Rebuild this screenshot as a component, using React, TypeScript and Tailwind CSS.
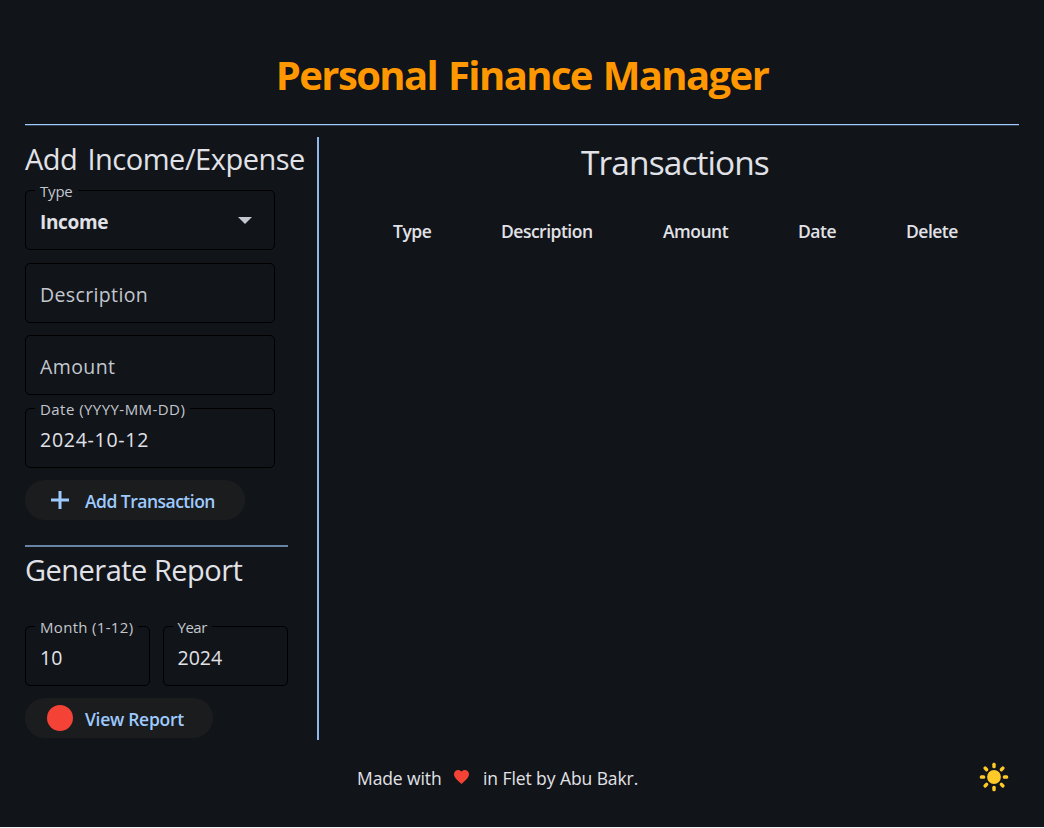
import type { ReactNode } from 'react';

function Field({
  label,
  value,
  placeholder,
  className = '',
  valueClass = '',
  labelClass = '',
  children,
}: {
  label?: string;
  value?: string;
  placeholder?: string;
  className?: string;
  valueClass?: string;
  labelClass?: string;
  children?: ReactNode;
}) {
  return (
    <div className={`relative flex h-[60px] items-center justify-between rounded-[5px] border-[1.25px] border-black pl-[14px] text-[19.5px] leading-[24px] ${className}`}>
      {label && (
        <span className={`absolute -top-[10px] left-[9px] bg-[#111418] px-[5px] text-[15px] leading-[20px] text-[#c3c7cf] ${labelClass}`}>
          {label}
        </span>
      )}
      <span className={`pt-[4px] ${placeholder ? 'text-[#c3c7cf]' : 'text-[#e1e2e8]'} ${valueClass}`}>{value ?? placeholder}</span>
      {children}
    </div>
  );
}

function PillButton({ icon, children, className = '' }: { icon: ReactNode; children: ReactNode; className?: string }) {
  return (
    <button className={`flex h-[40px] items-center rounded-full bg-[#1b1c1d] pl-[20px] text-[17.5px] leading-[24px] font-semibold text-[#9ecaff] ${className}`}>
      <span className="flex w-[30px] justify-center">{icon}</span>
      <span className="pt-[1px] pl-[10px] whitespace-nowrap">{children}</span>
    </button>
  );
}

function Sun() {
  return (
    <svg className="h-[30px] w-[30px]" viewBox="-15 -15 30 30" fill="#ffca28">
      <circle r="6.9" />
      {[0, 45, 90, 135, 180, 225, 270, 315].map((angle) => (
        <rect key={angle} x="-1.7" y="-14.2" width="3.4" height="5.4" rx="1.5" transform={`rotate(${angle})`} />
      ))}
    </svg>
  );
}

export default function App() {
  return (
    <div className="flex h-[828px] w-[1044px] flex-col border-b border-[#f0f0f0] bg-[#111418] px-[25px] pt-[45px] font-['Open_Sans','Noto_Sans',sans-serif] text-[#e1e2e8]">
      <h1 className="h-[60px] text-center text-[40px] leading-[60px] font-bold tracking-[-1.6px] text-[#ff9800] [word-spacing:2px]">
        Personal Finance Manager
      </h1>
      <div className="mt-[19px] h-[2px] w-[994px] border-b border-[#324051] bg-[#9ecaff]" />

      <main className="mt-[11px] flex h-[603px]">
        <section className="flex w-[292px] flex-col items-start">
          <h2 className="h-[44px] text-[29px] leading-[44px] tracking-[-0.48px] whitespace-nowrap [word-spacing:3px]">Add Income/Expense</h2>
          <Field label="Type" value="Income" className="mt-[9px] w-[250px]" valueClass="text-[19px] font-bold tracking-[-0.35px]" labelClass="tracking-[-0.2px]">
            <svg className="mr-[22px] h-[7px] w-[14px]" viewBox="0 0 14 7">
              <path d="M0 0H14L7 7Z" fill="#c3c7cf" />
            </svg>
          </Field>
          <Field placeholder="Description" className="mt-[13px] w-[250px]" valueClass="tracking-[0.36px]" />
          <Field placeholder="Amount" className="mt-[12px] w-[250px]" valueClass="tracking-[0.4px]" />
          <Field label="Date (YYYY-MM-DD)" value="2024-10-12" className="mt-[13px] w-[250px]" valueClass="tracking-[0.74px]" labelClass="tracking-[0.45px]" />
          <PillButton
            className="mt-[12px] w-[220px] tracking-[-0.51px]"
            icon={
              <svg className="h-[18px] w-[18px]" viewBox="0 0 18 18">
                <path d="M9 0V18M0 9H18" stroke="#9ecaff" strokeWidth="3" />
              </svg>
            }
          >
            Add Transaction
          </PillButton>
          <div className="mt-[25px] h-[2px] w-[263px] bg-[#6883a6]" />
          <h2 className="mt-[1px] h-[44px] text-[29px] leading-[44px] tracking-[-0.52px]">Generate Report</h2>
          <div className="mt-[34px] flex gap-[12.5px]">
            <Field label="Month (1-12)" value="10" className="w-[125px]" labelClass="tracking-[0.32px]" />
            <Field label="Year" value="2024" className="w-[125px]" labelClass="tracking-[-0.5px]" />
          </div>
          <PillButton className="mt-[12px] w-[188px] tracking-[-0.29px]" icon={<span className="h-[26px] w-[26px] rounded-full bg-[#f44336]" />}>
            View Report
          </PillButton>
        </section>

        <div className="w-[2px] bg-[#8fb7ea]" />

        <section className="flex-1 pl-[12px]">
          <h2 className="h-[50px] text-center text-[33.5px] leading-[50px] tracking-[-0.93px]">Transactions</h2>
          <div className="mt-[32px] flex pl-[62px] text-[17.5px] leading-[24px] font-semibold tracking-[-0.5px]">
            <span className="w-[108px]">Type</span>
            <span className="w-[162px]">Description</span>
            <span className="w-[135px]">Amount</span>
            <span className="w-[108px]">Date</span>
            <span>Delete</span>
          </div>
        </section>
      </main>

      <footer className="mt-[21px] flex h-[32px] items-center text-[17.5px] leading-[24px]">
        <span className="w-[429px] pt-[2px] pl-[332px] tracking-[-0.1px] whitespace-nowrap">Made with</span>
        <svg className="h-[14px] w-[15px]" viewBox="2 3 20 18.35" preserveAspectRatio="none">
          <path
            fill="#f44336"
            d="M12 21.35l-1.45-1.32C5.4 15.36 2 12.28 2 8.5 2 5.42 4.42 3 7.5 3c1.74 0 3.41.81 4.5 2.09C13.09 3.81 14.76 3 16.5 3 19.58 3 22 5.42 22 8.5c0 3.78-3.4 6.86-8.55 11.54L12 21.35z"
          />
        </svg>
        <span className="pt-[2px] pl-[14px] tracking-[-0.08px] whitespace-nowrap">in Flet by Abu Bakr.</span>
        <span className="ml-auto pr-[10px]">
          <Sun />
        </span>
      </footer>
    </div>
  );
}
